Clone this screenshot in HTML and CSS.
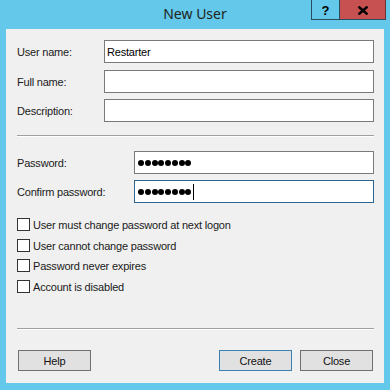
FILE: index.html
```html
<!DOCTYPE html>
<html>
<head>
<meta charset="utf-8">
<link rel="stylesheet" href="styles.css">
</head>
<body>
<div class="titlebar">
  <span class="title">New User</span>
  <div class="caption">
    <div class="cbtn help">?</div>
    <div class="cbtn close">
      <svg width="12" height="9" viewBox="0 0 12 9"><path d="M1.5 0.5 L10.5 8.5 M10.5 0.5 L1.5 8.5" stroke="#000" stroke-width="2.4" fill="none"/></svg>
    </div>
  </div>
</div>
<div class="client">
  <div class="row r1"><span class="lbl">User name:</span><div class="field wide">Restarter</div></div>
  <div class="row r2"><span class="lbl">Full name:</span><div class="field wide"></div></div>
  <div class="row r3"><span class="lbl">Description:</span><div class="field wide"></div></div>
  <div class="sep sep1"></div>
  <div class="row r4"><span class="lbl lbl2">Password:</span><div class="field pw"><span class="dot"></span><span class="dot"></span><span class="dot"></span><span class="dot"></span><span class="dot"></span><span class="dot"></span><span class="dot"></span><span class="dot"></span></div></div>
  <div class="row r5"><span class="lbl lbl2">Confirm password:</span><div class="field pw focus"><span class="dot"></span><span class="dot"></span><span class="dot"></span><span class="dot"></span><span class="dot"></span><span class="dot"></span><span class="dot"></span><span class="dot"></span><span class="caret"></span></div></div>
  <div class="check c1"><span class="box"></span><span class="ctext">User must change password at next logon</span></div>
  <div class="check c2"><span class="box"></span><span class="ctext">User cannot change password</span></div>
  <div class="check c3"><span class="box"></span><span class="ctext">Password never expires</span></div>
  <div class="check c4"><span class="box"></span><span class="ctext">Account is disabled</span></div>
  <div class="sep sep2"></div>
  <div class="buttons">
    <div class="btn">Help</div>
    <div class="spacer"></div>
    <div class="btn default">Create</div>
    <div class="btn last">Close</div>
  </div>
</div>
</body>
</html>
```
FILE: styles.css
```css
html, body {
  margin: 0;
  padding: 0;
}
body {
  width: 390px;
  height: 390px;
  overflow: hidden;
  background: #63c8ea;
  font-family: "Liberation Sans", Arial, sans-serif;
  font-size: 11px;
  letter-spacing: -0.2px;
  color: #000;
}
.titlebar {
  height: 29px;
  position: relative;
  text-align: center;
  letter-spacing: 0;
}
.title {
  font-family: "Noto Sans", "Open Sans", sans-serif;
  font-size: 14px;
  line-height: 28px;
  color: #1e2420;
}
.caption {
  position: absolute;
  top: 0;
  left: 311px;
  display: flex;
}
.cbtn {
  box-sizing: border-box;
  height: 20px;
  display: flex;
  align-items: center;
  justify-content: center;
  border-bottom: 1px solid #2a4c5c;
}
.help {
  width: 29px;
  border-left: 1px solid #2a4c5c;
  border-right: 1px solid #2a4c5c;
  font-weight: bold;
  font-size: 13px;
  padding-top: 1px;
}
.close {
  width: 46px;
  background: #c75050;
  border-right: 1px solid #6b3535;
  padding-top: 1px;
}
.client {
  margin-left: 6px;
  width: 378px;
  height: 354px;
  box-sizing: border-box;
  background: #f0f0f0;
  padding: 11px 10px 0 11px;
}
.row {
  display: flex;
  align-items: center;
}
.lbl {
  width: 87px;
  color: #1a1a1a;
}
.lbl2 {
  width: 117px;
}
.field {
  box-sizing: border-box;
  height: 23px;
  border: 1px solid #7a7a7a;
  background: #fff;
  display: flex;
  align-items: center;
  padding-left: 2px;
  padding-top: 1px;
  font-size: 11px;
}
.wide {
  width: 270px;
}
.pw {
  width: 240px;
  padding-left: 3px;
  padding-top: 0;
  gap: 0.75px;
}
.focus {
  border-color: #2e6490;
}
.dot {
  width: 6px;
  height: 6px;
  border-radius: 50%;
  background: #000;
}
.caret {
  width: 1px;
  height: 16px;
  background: #000;
  margin-left: 1px;
}
.r2 { margin-top: 7px; }
.r3 { margin-top: 6px; }
.sep {
  height: 1px;
  background: #a0a0a0;
  border-bottom: 1px solid #fff;
}
.sep1 { margin-top: 13px; }
.r4 { margin-top: 14px; }
.r5 { margin-top: 6px; }
.check {
  display: flex;
  align-items: center;
  height: 13px;
  gap: 3px;
  color: #1a1a1a;
}
.box {
  box-sizing: border-box;
  width: 13px;
  height: 13px;
  border: 1px solid #333;
  background: #fff;
}
.c1 { margin-top: 15px; }
.c2 { margin-top: 8px; }
.c3 { margin-top: 7px; }
.c4 { margin-top: 8px; }
.sep2 { margin-top: 35px; }
.buttons {
  display: flex;
  margin-top: 20px;
  padding: 0 1px 0 1px;
  gap: 8px;
}
.spacer { flex: 1; }
.btn {
  box-sizing: border-box;
  width: 73px;
  height: 21px;
  border: 1px solid #707070;
  background: #e1e1e1;
  display: flex;
  align-items: center;
  justify-content: center;
  color: #111;
}
.default {
  border-color: #3c7fb1;
}
```
